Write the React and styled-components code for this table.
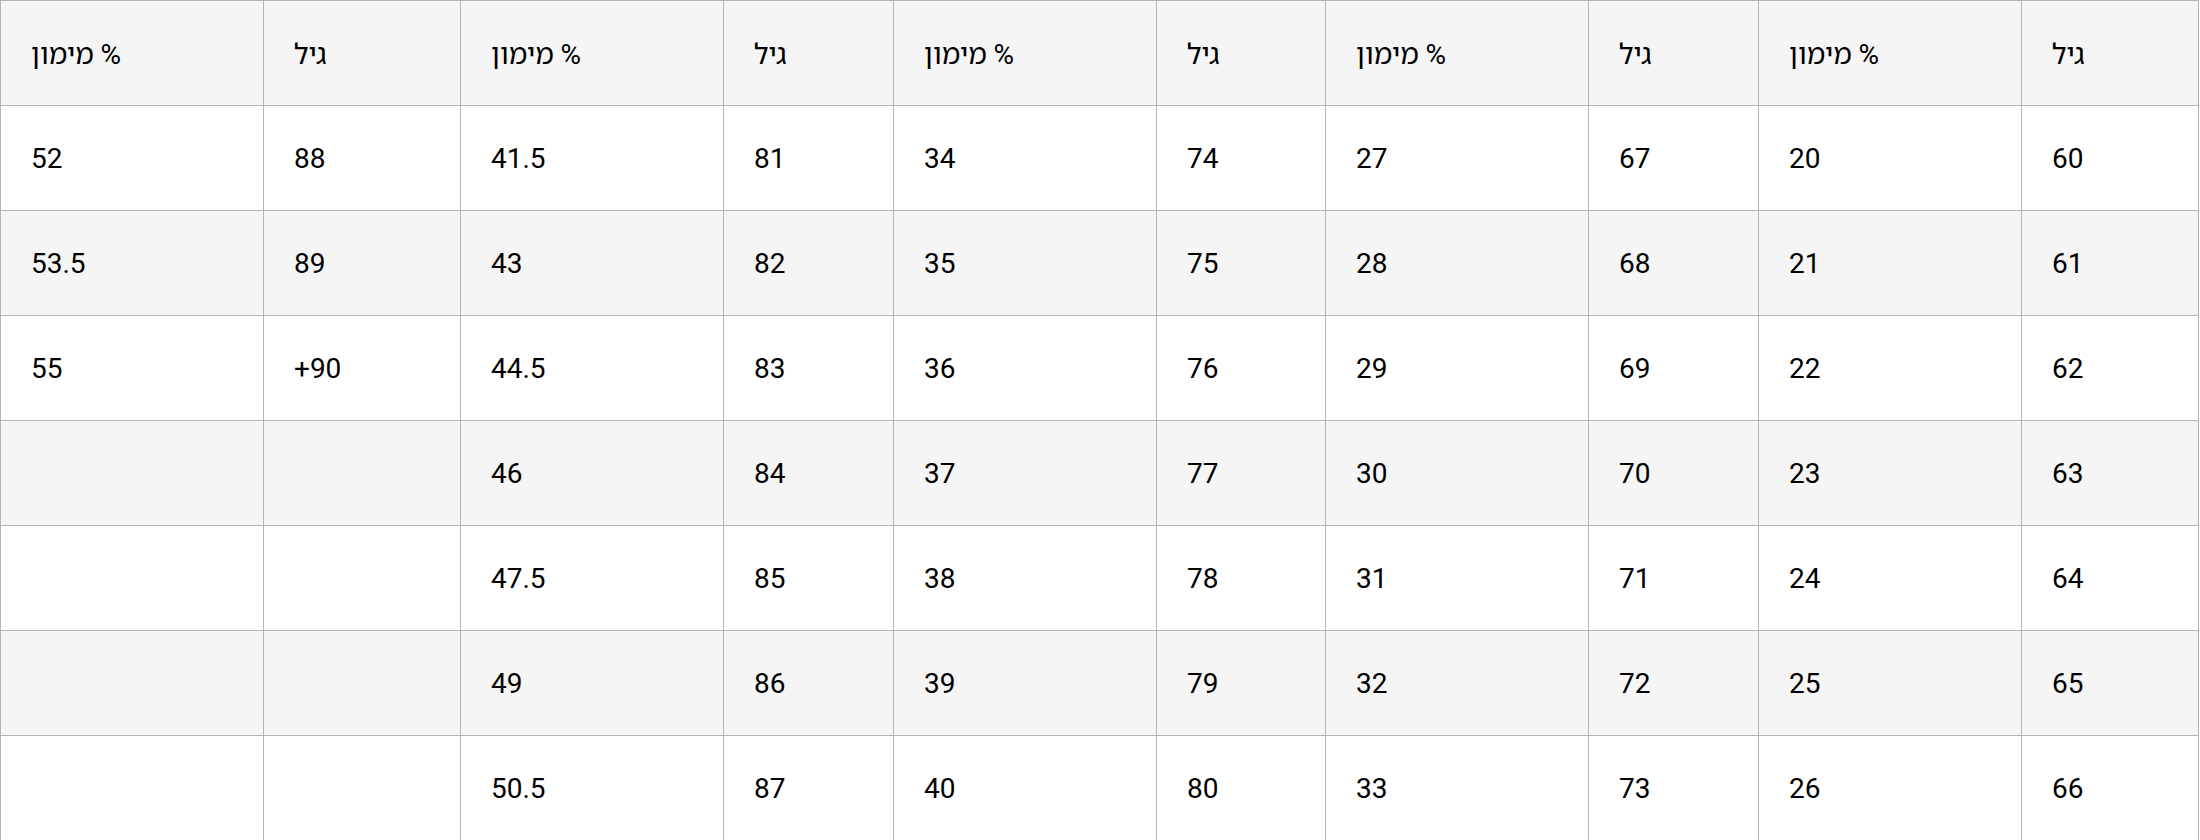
import React from 'react';
import styled, { createGlobalStyle } from 'styled-components';

const GlobalStyle = createGlobalStyle`
  html, body {
    margin: 0;
    padding: 0;
    background: #ffffff;
  }
  body {
    font-family: Roboto, "Noto Sans Hebrew", Arimo, "Liberation Sans", sans-serif;
    color: #000000;
  }
`;

// right-to-left order: first column in the markup sits at the far right
const COL_WIDTHS = [177, 263, 170, 263, 169, 263, 170, 263, 197, 263];

const FundingTable = styled.table`
  direction: rtl;
  width: 2199px;
  table-layout: fixed;
  border-collapse: collapse;
  font-size: 28px;
`;

const Row = styled.tr`
  background-color: ${(p) => (p.$shaded ? '#f5f5f5' : '#ffffff')};
`;

const HeaderCell = styled.th`
  direction: ltr;
  text-align: left;
  font-weight: 400;
  height: 104px;
  padding: 0 30px;
  border: 1px solid #b4b4b4;
  background-color: #f5f5f5;
  white-space: nowrap;
`;

const Cell = styled.td`
  direction: ltr;
  text-align: left;
  height: 104px;
  padding: 0 30px;
  border: 1px solid #b4b4b4;
  white-space: nowrap;
`;

const pairs = [
  { ages: [60, 61, 62, 63, 64, 65, 66], funding: [20, 21, 22, 23, 24, 25, 26] },
  { ages: [67, 68, 69, 70, 71, 72, 73], funding: [27, 28, 29, 30, 31, 32, 33] },
  { ages: [74, 75, 76, 77, 78, 79, 80], funding: [34, 35, 36, 37, 38, 39, 40] },
  { ages: [81, 82, 83, 84, 85, 86, 87], funding: [41.5, 43, 44.5, 46, 47.5, 49, 50.5] },
  { ages: [88, 89, '+90'], funding: [52, 53.5, 55] },
];

const ROWS = 7;

const App = () => (
  <>
    <GlobalStyle />
    <FundingTable>
      <colgroup>
        {COL_WIDTHS.map((w, i) => (
          <col key={i} style={{ width: w }} />
        ))}
      </colgroup>
      <thead>
        <Row>
          {pairs.map((_, i) => (
            <React.Fragment key={i}>
              <HeaderCell>גיל</HeaderCell>
              <HeaderCell>מימון %</HeaderCell>
            </React.Fragment>
          ))}
        </Row>
      </thead>
      <tbody>
        {Array.from({ length: ROWS }).map((_, r) => (
          <Row key={r} $shaded={r % 2 === 1}>
            {pairs.map((p, i) => (
              <React.Fragment key={i}>
                <Cell>{p.ages[r] ?? ''}</Cell>
                <Cell>{p.funding[r] ?? ''}</Cell>
              </React.Fragment>
            ))}
          </Row>
        ))}
      </tbody>
    </FundingTable>
  </>
);

export default App;
